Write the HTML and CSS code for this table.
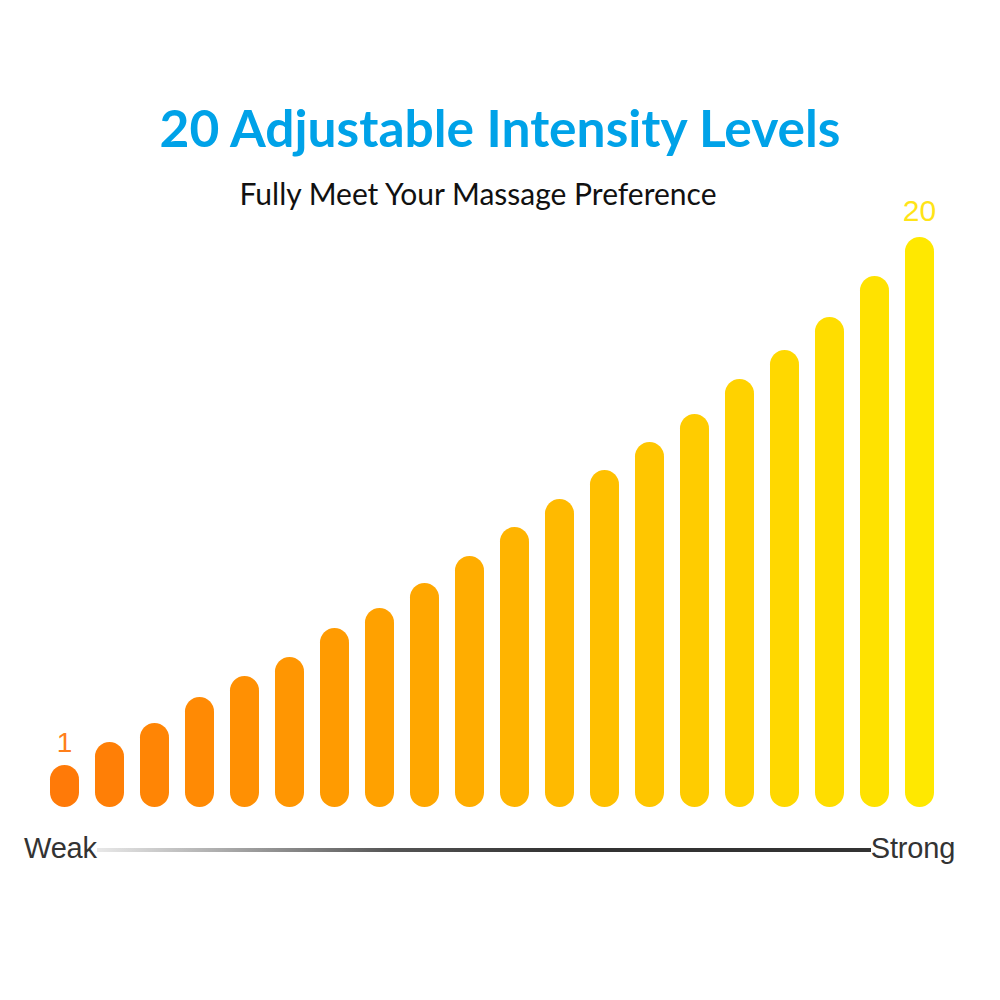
FILE: index.html
```html
<!DOCTYPE html>
<html>
<head>
<meta charset="utf-8">
<link rel="stylesheet" href="styles.css">
</head>
<body>
<div class="page">
  <h1 class="title">20 Adjustable Intensity Levels</h1>
  <p class="subtitle">Fully Meet Your Massage Preference</p>
  <div class="chart">
    <div class="col"><span class="lvl lvl-min">1</span><div class="bar" style="height:42px;background:#ff7a08"></div></div>
    <div class="col"><div class="bar" style="height:65px;background:#ff7f06"></div></div>
    <div class="col"><div class="bar" style="height:84px;background:#ff8505"></div></div>
    <div class="col"><div class="bar" style="height:110px;background:#ff8a04"></div></div>
    <div class="col"><div class="bar" style="height:131px;background:#ff9003"></div></div>
    <div class="col"><div class="bar" style="height:150px;background:#ff9602"></div></div>
    <div class="col"><div class="bar" style="height:179px;background:#ff9b01"></div></div>
    <div class="col"><div class="bar" style="height:199px;background:#ffa100"></div></div>
    <div class="col"><div class="bar" style="height:224px;background:#ffa700"></div></div>
    <div class="col"><div class="bar" style="height:251px;background:#ffad00"></div></div>
    <div class="col"><div class="bar" style="height:280px;background:#ffb400"></div></div>
    <div class="col"><div class="bar" style="height:308px;background:#ffba00"></div></div>
    <div class="col"><div class="bar" style="height:337px;background:#ffc000"></div></div>
    <div class="col"><div class="bar" style="height:365px;background:#ffc600"></div></div>
    <div class="col"><div class="bar" style="height:393px;background:#ffcc00"></div></div>
    <div class="col"><div class="bar" style="height:428px;background:#ffd200"></div></div>
    <div class="col"><div class="bar" style="height:457px;background:#ffd800"></div></div>
    <div class="col"><div class="bar" style="height:490px;background:#ffdd00"></div></div>
    <div class="col"><div class="bar" style="height:531px;background:#ffe200"></div></div>
    <div class="col"><span class="lvl lvl-max">20</span><div class="bar" style="height:570px;background:#ffe800"></div></div>
  </div>
  <div class="axis">
    <span class="axis-label">Weak</span>
    <div class="axis-line"></div>
    <span class="axis-label">Strong</span>
  </div>
</div>
</body>
</html>
```
FILE: styles.css
```css
html, body {
  margin: 0;
  padding: 0;
  background: #ffffff;
}
.page {
  width: 1000px;
  height: 1000px;
  padding-top: 95px;
  box-sizing: border-box;
}
.title {
  margin: 0;
  font-family: Lato, "Open Sans", sans-serif;
  font-weight: 700;
  font-size: 51.5px;
  line-height: 64px;
  color: #00a2e8;
  text-align: center;
}
.subtitle {
  margin: 16px 0 0 0;
  padding-right: 44px;
  font-family: Lato, "Open Sans", sans-serif;
  font-weight: 400;
  font-size: 30px;
  line-height: 36px;
  color: #111111;
  text-align: center;
}
.chart {
  display: flex;
  align-items: flex-end;
  gap: 16px;
  padding-left: 50px;
  height: 596px;
  box-sizing: border-box;
}
.col {
  display: flex;
  flex-direction: column;
  align-items: center;
  width: 29px;
}
.bar {
  width: 29px;
  border-radius: 14.5px;
}
.lvl {
  font-family: "Liberation Sans", Arial, sans-serif;
  font-size: 28px;
  line-height: 28px;
  margin-bottom: 8px;
}
.lvl-min {
  color: #ff7f1a;
  font-weight: 300;
}
.lvl-max {
  font-size: 30px;
  line-height: 30px;
  margin-bottom: 11px;
  color: #ffe417;
  margin-left: 0;
}
.axis {
  display: flex;
  align-items: center;
  margin-top: 26px;
  padding-left: 24px;
}
.axis-label {
  font-family: "Liberation Sans", Arial, sans-serif;
  font-size: 29px;
  line-height: 30px;
  color: #333333;
  letter-spacing: -0.2px;
}
.axis-line {
  width: 774px;
  height: 4px;
  margin-top: 3px;
  background: linear-gradient(to right, #e8e8e8 0%, #b0b0b0 15%, #555555 38%, #333333 60%, #333333 100%);
}
```
